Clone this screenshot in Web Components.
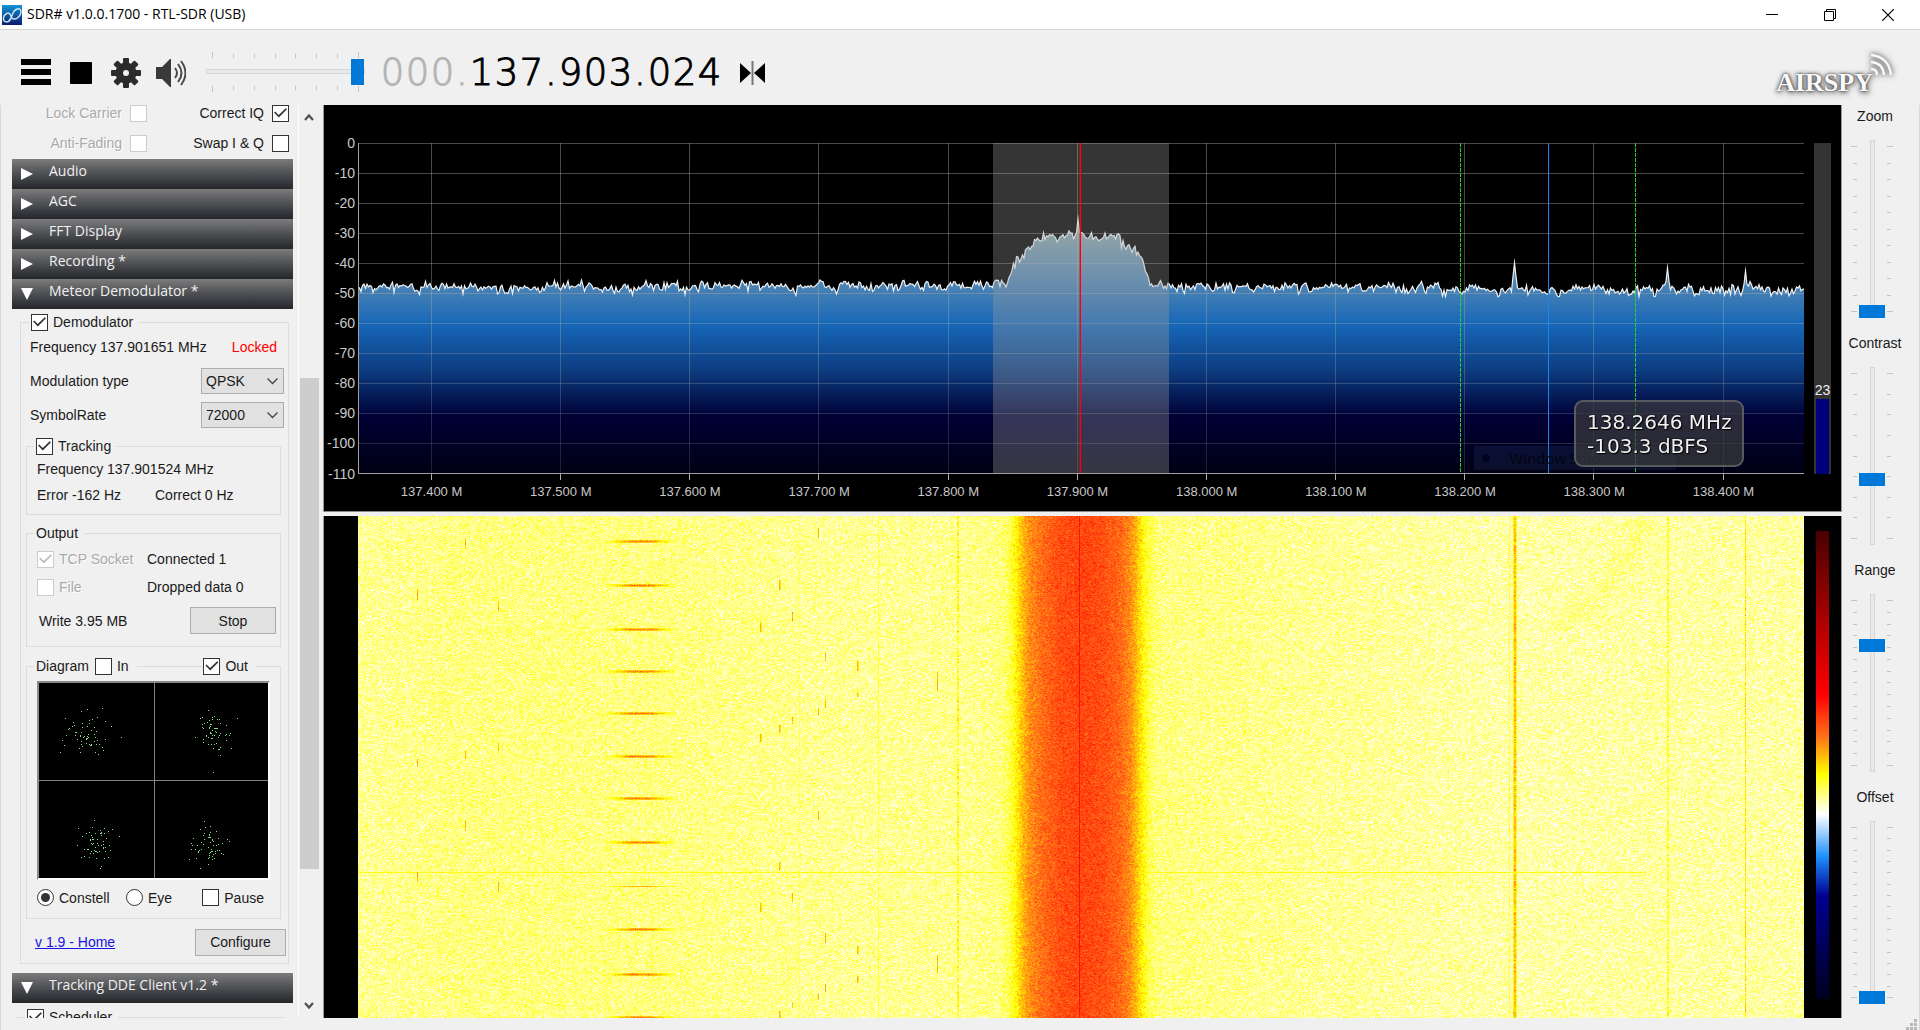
<!DOCTYPE html>
<html lang="en">
<head>
<meta charset="utf-8">
<title>SDR# v1.0.0.1700 - RTL-SDR (USB)</title>
<style>
  html, body { margin: 0; height: 100%; background: #f0f0f0; overflow: hidden; }
  body { font: 14px/18px "Liberation Sans", Arial, sans-serif; color: #1a1a1a; }
</style>
</head>
<body>
<sdr-app></sdr-app>

<script>
const define = (name, html, setup) => {
  const t = document.createElement('template');
  t.innerHTML = html;
  customElements.define(name, class extends HTMLElement {
    connectedCallback() {
      if (this.shadowRoot) return;
      const root = this.attachShadow({ mode: 'open' });
      root.append(t.content.cloneNode(true));
      if (setup) setup.call(this, root);
    }
  });
};

/* Seeded generator so that every load draws the same noise */
const rng = seed => () => {
  seed = (seed + 0x6D2B79F5) | 0;
  let t = Math.imul(seed ^ (seed >>> 15), 1 | seed);
  t = (t + Math.imul(t ^ (t >>> 7), 61 | t)) ^ t;
  return ((t ^ (t >>> 14)) >>> 0) / 4294967296;
};
const gauss = r => (r() + r() + r() + r() - 2) * 1.73;
const curve = (pts, x) => {
  if (x <= pts[0][0]) return pts[0][1];
  for (let i = 1; i < pts.length; i++)
    if (x <= pts[i][0]) {
      const [a, b] = pts[i - 1], [c, d] = pts[i];
      return b + (d - b) * (x - a) / (c - a);
    }
  return pts[pts.length - 1][1];
};
const fitCanvas = (host, canvas, draw) => {
  const run = () => {
    const w = Math.round(host.clientWidth), h = Math.round(host.clientHeight);
    if (!w || !h || (canvas.width === w && canvas.height === h)) return;
    canvas.width = w; canvas.height = h;
    draw(canvas.getContext('2d'), w, h);
  };
  run();
  new ResizeObserver(run).observe(host);
};

/* ---------- small controls ---------- */
define('ui-check', `
<style>
  :host { display: inline-block; }
  label { display: flex; align-items: center; gap: 5px; white-space: nowrap; }
  :host([before]) label { flex-direction: row-reverse; gap: 8px; height: 16px; }
  input { appearance: none; box-sizing: border-box; margin: 0; width: 17px; height: 17px; flex: none;
          border: 1px solid #333; background: #fff; display: grid; place-items: center; }
  input:checked::before { content: ""; width: 13px; height: 11px; background: #333;
    clip-path: polygon(0 45%, 9% 36%, 36% 68%, 90% 6%, 100% 15%, 37% 90%); }
  input[type=radio] { border-radius: 50%; }
  input[type=radio]:checked::before { width: 9px; height: 9px; border-radius: 50%; clip-path: none; }
  input:disabled { border-color: #ccc; }
  input:disabled:checked::before { background: #bbb; }
  :host([off]) label { color: #a9a9a9; text-shadow: 1px 1px #fff; }
</style>
<label><input type="checkbox"><slot></slot></label>`, function (root) {
  const i = root.querySelector('input');
  if (this.hasAttribute('radio')) { i.type = 'radio'; i.name = 'view'; }
  i.checked = this.hasAttribute('on');
  i.disabled = this.hasAttribute('off');
});

define('ui-group', `
<style>
  :host { display: block; }
  fieldset { margin: 0; min-width: 0; border: 1px solid #dcdcdc; padding: 0; }
  legend { margin-left: var(--legend-x, 8px); padding: 0 6px 0 2px; height: 18px; display: flex; align-items: center; }
  :host([wide]) legend { width: calc(100% - 8px); box-sizing: border-box; padding-right: 0; }
  :host([wide]) slot[name=legend] { display: flex; align-items: center; width: 100%; }
</style>
<fieldset><legend><slot name="legend"></slot></legend><slot></slot></fieldset>`);

define('ui-select', `
<style>
  :host { display: block; position: relative; width: 83px; height: 26px; }
  select { appearance: none; box-sizing: border-box; width: 100%; height: 100%; margin: 0; border: 1px solid #adadad;
           border-radius: 0; background: #e1e1e1; padding: 0 4px; font: inherit; color: inherit; }
  svg { position: absolute; right: 6px; top: 10px; pointer-events: none; }
</style>
<select><option></option></select>
<svg width="11" height="7"><path d="M.5 .5L5.500 5.500L10.500 .5" fill="none" stroke="#444" stroke-width="1.300"/></svg>`,
function (root) {
  root.querySelector('option').textContent = this.getAttribute('value');
  root.querySelector('select').setAttribute('aria-label', this.getAttribute('label'));
});

define('ui-button', `
<style>
  :host { display: block; height: 27px; }
  button { width: 100%; height: 100%; box-sizing: border-box; border: 1px solid #adadad; background: #e1e1e1;
           font: inherit; color: inherit; padding: 0; }
</style>
<button type="button"><slot></slot></button>`);

define('ui-slider', `
<style>
  :host { display: flex; flex-direction: column; align-items: center; --len: 178px; }
  :host([long]) { --len: 183px; }
  label { line-height: 22px; padding-left: 6px; }
  .row { display: flex; height: var(--len); margin: 13px 0 14px; gap: 1px; }
  .ticks { display: flex; flex-direction: column; justify-content: space-between; width: 6px; padding: 6px 0; align-items: flex-end; }
  .ticks.r { align-items: flex-start; }
  .ticks i { width: 4px; height: 1px; background: #c4c4c4; }
  .ticks i:first-child, .ticks i:last-child { width: 6px; }
  input { appearance: none; margin: 0; padding: 0; width: 28px; height: var(--len);
          writing-mode: vertical-lr; direction: rtl;
          background: linear-gradient(#d6d6d6, #d6d6d6) center / 5px 100% no-repeat; }
  input::-webkit-slider-runnable-track { background: linear-gradient(#e7eaea, #e7eaea) center / 3px calc(100% - 2px) no-repeat; width: 28px; height: 100%; }
  input::-webkit-slider-thumb { appearance: none; width: 28px; height: 13px; background: #0078d7 content-box; border: 0 solid transparent; border-width: 0 1px; border-radius: 0; }
</style>
<label for="s"></label>
<div class="row"><span class="ticks l"></span><input id="s" type="range" min="0" max="100"><span class="ticks r"></span></div>`,
function (root) {
  root.querySelector('label').textContent = this.getAttribute('label');
  root.querySelector('input').value = this.getAttribute('value');
  for (const c of root.querySelectorAll('.ticks')) c.innerHTML = '<i></i>'.repeat(+this.getAttribute('ticks'));
});

define('volume-slider', `
<style>
  :host { display: flex; flex-direction: column; width: 159px; gap: 1px; }
  .t { display: flex; justify-content: space-between; padding: 0 6px; }
  .t i { width: 1px; height: 4px; background: #c4c4c4; }
  .t i:first-child, .t i:last-child { height: 6px; }
  .t.a { align-items: flex-end; }
  input { appearance: none; margin: 0; width: 159px; height: 26px;
          background: linear-gradient(#d6d6d6, #d6d6d6) center / 100% 5px no-repeat; }
  input::-webkit-slider-runnable-track { height: 26px; background: linear-gradient(#e7eaea, #e7eaea) center / calc(100% - 2px) 3px no-repeat; }
  input::-webkit-slider-thumb { appearance: none; width: 13px; height: 26px; background: #0078d7; border: 0; border-radius: 0; }
</style>
<span class="t a"><i></i><i></i><i></i><i></i><i></i><i></i><i></i><i></i></span>
<input type="range" min="0" max="100" value="99" aria-label="Volume">
<span class="t"><i></i><i></i><i></i><i></i><i></i><i></i><i></i><i></i></span>`);

define('panel-header', `
<style>
  :host { display: block; height: 30px; }
  button { width: 100%; height: 30px; border: 0; margin: 0; padding: 0 0 6px 9px; display: flex; align-items: center; gap: 16px;
    background: linear-gradient(#7c7c7c, #5b5c5f 35%, #3c3e43 70%, #24262a); color: #f0f0f0;
    font: 14px/20px "Open Sans", "Noto Sans", sans-serif; text-align: left; }
  svg { margin-top: 6px; }
</style>
<button type="button"><svg width="12" height="12"><path fill="#fff" d="M0 0L12 6L0 12Z"/></svg><slot></slot></button>`,
function (root) {
  if (this.hasAttribute('open')) root.querySelector('path').setAttribute('d', 'M0 0H12L6 12Z');
});

/* ---------- title bar and toolbar ---------- */
define('title-bar', `
<style>
  :host { display: flex; height: 29px; align-items: center; background: #fff; border-bottom: 1px solid #d4d6d6; padding: 0 3px 0 2px; color: #000; }
  h1 { font: 14px/20px "Open Sans", "Noto Sans", sans-serif; margin: 0 auto 0 5px; padding-bottom: 1px; }
  button { border: 0; padding: 0; background: none; width: 58px; height: 28px; display: grid; place-items: center; }
</style>
<svg width="20" height="20"><defs><linearGradient id="g" x2="0" y2="1"><stop stop-color="#1295d8"/><stop offset="1" stop-color="#0a1a6c"/></linearGradient></defs>
  <rect width="20" height="20" fill="url(#g)"/><path d="M9 14C6 19 1 17 1.500 13C2 9 7 6 8.500 10C9.500 13 10 14 12 14C17 14 20 8 18.500 5C17 2 12 5 11 8C10 11 9 14 6.500 16" fill="none" stroke="#cfe6f5" stroke-width="1.400"/></svg>
<h1>SDR# v1.0.0.1700 - RTL-SDR (USB)</h1>
<button type="button" aria-label="Minimize"><svg width="12" height="12"><path d="M0 5.500H12" stroke="#000"/></svg></button>
<button type="button" aria-label="Restore"><svg width="12" height="12" fill="none" stroke="#000"><path d="M.5 2.500H9.500V11.500H.5ZM2.500 2.500V.5H11.500V9.500H9.500"/></svg></button>
<button type="button" aria-label="Close"><svg width="12" height="12"><path d="M0 0L12 12M12 0L0 12" stroke="#000" stroke-width="1.200"/></svg></button>`);

define('freq-display', `
<style>
  :host { display: flex; font: 200 37px/44px "DejaVu Sans Light", "DejaVu Sans", sans-serif; color: #000; -webkit-text-stroke: 1px; }
  span { width: 25px; text-align: center; }
  .p { width: 14px; }
  .dim { color: #b4b4b4; }
</style>`, function (root) {
  [...this.getAttribute('value')].forEach((c, i) => {
    const s = document.createElement('span');
    s.textContent = c;
    s.className = (c === '.' ? 'p ' : '') + (i < 4 ? 'dim' : '');
    root.append(s);
  });
});

define('tool-bar', `
<style>
  :host { display: flex; align-items: center; height: 65px; padding: 10px 27px 0 21px; }
  button { border: 0; background: none; padding: 0; display: block; }
  button svg { display: block; }
  .stop { margin: 0 19px; }
  .gear { margin-right: 15px; }
  volume-slider { margin: 0 15px 0 20px; padding-bottom: 2px; }
  .step { margin-left: 18px; }
  .logo { margin-left: auto; display: flex; align-items: flex-end; height: 48px; color: #fafafa;
    font: bold 26px/28px "Liberation Serif", serif; text-shadow: 0 0 2px #444, 0 0 4px #555, 1px 2px 6px #666; }
  .logo svg { margin: 0 0 20px -4px; filter: drop-shadow(0 0 2px #777) drop-shadow(0 0 3px #999); }
</style>
<button type="button" aria-label="Menu"><svg width="30" height="27" ><path d="M0 0H30V6H0ZM0 10H30V16H0ZM0 20H30V26H0Z"/></svg></button>
<button type="button" class="stop" aria-label="Stop"><svg width="22" height="22"><rect width="22" height="22" rx="1"/></svg></button>
<button type="button" class="gear" aria-label="Settings"><svg width="30" height="30" viewBox="-15 -15 30 30"><g fill="#2b2b2b"><circle r="10.500"/><g id="teeth"></g></g><circle r="3" fill="#f0f0f0"/></svg></button>
<button type="button" aria-label="Mute"><svg width="30" height="28"><path fill="#3a3a3a" d="M0 8H6L14 0H15V28H14L6 20H0Z"/><path d="M19 9Q23 14 19 19M22 5Q29 14 22 23M25 2Q34 14 25 26" fill="none" stroke="#4a4a4a" stroke-width="2"/></svg></button>
<volume-slider></volume-slider>
<freq-display value="000.137.903.024"></freq-display>
<button type="button" class="step" aria-label="Snap"><svg width="25" height="24"><path d="M0 2L11 12L0 22ZM25 2L14 12L25 22Z"/><path d="M12.500 0V24" stroke="#777" stroke-width="2"/></svg></button>
<div class="logo">AIRSPY<svg width="24" height="24" fill="none" stroke="#f7f7f7" stroke-width="2.500"><path d="M2 2Q20 4 22 22M2 9Q14 10 15 22M2 16Q8 16 8 22"/></svg></div>`,
function (root) {
  root.querySelector('#teeth').innerHTML = [0, 45, 90, 135, 180, 225, 270, 315]
    .map(a => `<rect x="-3" y="-15" width="6" height="7" rx="1" transform="rotate(${a})"/>`).join('');
});

/* ---------- side panel ---------- */
define('constellation-plot', `
<style>
  :host { display: block; height: 199px; margin: 0 10px; box-sizing: border-box; background: #000;
    border: solid; border-width: 2px; border-color: #8a8a8a #fff #fff #8a8a8a; }
  svg { display: block; width: 100%; height: 100%; }
</style>
<svg viewBox="0 0 229 195" preserveAspectRatio="none" shape-rendering="crispEdges"></svg>`, function (root) {
  const r = rng(77);
  let s = '<path d="M115.500 0V195M0 97.500H229" stroke="#808080"/><path fill="#86e08a" d="';
  for (const [cx, cy] of [[48, 50], [174, 48], [57, 160], [171, 161]])
    for (let i = 0; i < 62; i++)
      s += `M${Math.round(cx + gauss(r) * 10)} ${Math.round(cy + gauss(r) * 10)}h1v1h-1z`;
  root.querySelector('svg').innerHTML = s + 'M174 89h1v1h-1zM82 54h1v1h-1zM21 69h1v1h-1z"/>';
});

define('side-panel', `
<style>
  :host { display: flex; width: 322px; overflow: hidden; }
  .content { width: 297px; box-sizing: border-box; padding-left: 11px; overflow: hidden; flex: none; height: 100%; }
  .content > * { width: 281px; }
  .opts { display: grid; grid-template-columns: 135px 1fr; padding-right: 4px; box-sizing: border-box; justify-items: end; height: 54px; grid-auto-rows: 30px; align-items: start; }
  .main, .sched { box-sizing: border-box; width: 269px; margin: 4px 0 9px 8px; --legend-x: 8px; }
  .sched { margin: 5px 0 0 4px; }
  .row { display: flex; align-items: center; justify-content: space-between; height: 26px; padding: 0 4px 0 9px; }
  .lock { height: 28px; padding-right: 11px; margin: 2px 0 3px; }
  .lock b { font-weight: normal; color: #f00; }
  .sel { height: 34px; }
  ui-group ui-group { margin: 0 7px 8px 5px; --legend-x: 7px; }
  ui-group ui-group.track { margin: 5px 7px 9px 5px; }
  .track .row, .out .row { padding-left: 10px; justify-content: flex-start; }
  .track .row:first-of-type { padding-top: 1px; }
  .track .last { padding-bottom: 6px; }
  .track .last span { width: 118px; }
  .out .row { height: 28px; }
  .out .row > :first-child { width: 110px; }
  .out .row.first { padding-top: 3px; }
  .out .row.write { height: 39px; padding: 0 4px 6px 12px; justify-content: space-between; }
  .write ui-button { width: 86px; }
  ui-group ui-group.diag { margin-bottom: 0; margin-top: 10px; }
  .diag span { margin-right: 6px; }
  .diag hr { border: 0; height: 1px; background: #dcdcdc; margin: 0 0 0 8px; flex: 1; }
  .diag .tail { flex: 0 0 23px; }
  constellation-plot { margin-top: 6px; }
  .modes { height: 35px; padding: 0 16px 3px 10px; }
  .modes ui-check:nth-child(2) { margin-right: 14px; }
  .foot { height: 42px; padding: 2px 2px 0 14px; }
  .foot ui-button { width: 91px; }
  a { color: #1414e6; }
  .bar { width: 20px; border-left: 1px solid #fff; display: flex; flex-direction: column; align-items: center; }
  .bar button { border: 0; background: none; padding: 0; height: 24px; width: 20px; display: grid; place-items: center; flex: none; }
  .bar .a { flex: 249; } .bar .thumb { flex: 492; width: 19px; background: #cdcdcd; } .bar .b { flex: 125; }
</style>
<div class="content">
  <div class="opts"><ui-check before off>Lock Carrier</ui-check><ui-check before on>Correct IQ</ui-check>
    <ui-check before off>Anti-Fading</ui-check><ui-check before>Swap I &amp; Q</ui-check></div>
  <panel-header>Audio</panel-header>
  <panel-header>AGC</panel-header>
  <panel-header>FFT Display</panel-header>
  <panel-header>Recording *</panel-header>
  <panel-header open>Meteor Demodulator *</panel-header>
  <ui-group class="main">
    <ui-check slot="legend" on>Demodulator</ui-check>
    <div class="row lock"><span>Frequency 137.901651 MHz</span><b>Locked</b></div>
    <div class="row sel"><span>Modulation type</span><ui-select value="QPSK" label="Modulation type"></ui-select></div>
    <div class="row sel"><span>SymbolRate</span><ui-select value="72000" label="SymbolRate"></ui-select></div>
    <ui-group class="track">
      <ui-check slot="legend" on>Tracking</ui-check>
      <div class="row">Frequency 137.901524 MHz</div>
      <div class="row last"><span>Error -162 Hz</span>Correct 0 Hz</div>
    </ui-group>
    <ui-group class="out">
      <span slot="legend">Output</span>
      <div class="row first"><ui-check off on>TCP Socket</ui-check><span>Connected 1</span></div>
      <div class="row"><ui-check off>File</ui-check><span>Dropped data 0</span></div>
      <div class="row write"><span>Write 3.95 MB</span><ui-button>Stop</ui-button></div>
    </ui-group>
    <ui-group class="diag" wide>
      <span slot="legend">Diagram</span><ui-check slot="legend">In</ui-check><hr slot="legend"><ui-check slot="legend" on>Out</ui-check><hr slot="legend" class="tail">
      <constellation-plot></constellation-plot>
      <div class="row modes"><ui-check radio on>Constell</ui-check><ui-check radio>Eye</ui-check><ui-check>Pause</ui-check></div>
    </ui-group>
    <div class="row foot"><a href="#home">v 1.9 - Home</a><ui-button>Configure</ui-button></div>
  </ui-group>
  <panel-header open>Tracking DDE Client v1.2 *</panel-header>
  <ui-group class="sched"><ui-check slot="legend" on>Scheduler</ui-check><div class="row"></div></ui-group>
</div>
<div class="bar">
  <button type="button" aria-label="Scroll up"><svg width="10" height="8"><path d="M1 7L5 2.500L9 7" fill="none" stroke="#505050" stroke-width="2.200"/></svg></button>
  <div class="a"></div><div class="thumb"></div><div class="b"></div>
  <button type="button" aria-label="Scroll down"><svg width="10" height="8"><path d="M1 1L5 5.500L9 1" fill="none" stroke="#505050" stroke-width="2.200"/></svg></button>
</div>`);

/* ---------- spectrum ---------- */
define('spectrum-canvas', `
<style>:host { display: block; position: relative; overflow: hidden; } canvas { display: block; position: absolute; inset: 0; }</style>
<canvas></canvas>`, function (root) {
  fitCanvas(this, root.querySelector('canvas'), (c, W, H) => {
    const kx = W / 1446, ky = (H - 7) / 330, bottom = Math.round(330 * ky);
    const r = rng(1700), pts = [];
    const base = [[0, 145], [600, 143], [640, 142], [650, 138], [655, 127], [660, 117], [668, 107], [676, 101], [683, 95], [695, 94],
      [715, 91], [745, 91], [754, 92], [764, 99], [772, 106], [777, 109], [784, 121], [791, 136], [796, 143], [960, 144], [1100, 147], [1446, 147]];
    let slow = 0;
    for (let x = 0; x <= 1446; x += 1.5) {
      slow = slow * .62 + gauss(r) * 1.8;
      let y = curve(base, x) + slow + gauss(r) * 2;
      for (const [px, py] of [[720, 76], [1156.500, 120], [1309.500, 125], [1387.500, 128]]) {
        const d = Math.abs(x - px);
        if (d < 3) y = Math.min(y, py + d * 9);
      }
      pts.push([x * kx, y * ky]);
    }
    c.fillStyle = '#000'; c.fillRect(0, 0, W, H);
    const g = c.createLinearGradient(0, 0, 0, bottom);
    [[0, '#c8d0d0'], [.29, '#82a0ac'], [.455, '#417db4'], [.55, '#1767b8'], [.69, '#0c3c80'], [.83, '#000035'], [1, '#000014']]
      .forEach(s => g.addColorStop(...s));
    c.fillStyle = g;
    c.beginPath(); c.moveTo(0, bottom);
    pts.forEach(p => c.lineTo(p[0], p[1]));
    c.lineTo(W, bottom); c.fill();
    const grid = (x, y, w, h) => {
      const pale = c.createLinearGradient(0, 0, 0, bottom);
      pale.addColorStop(0, 'rgba(175,175,175,.42)'); pale.addColorStop(.45, 'rgba(175,175,175,.38)'); pale.addColorStop(1, 'rgba(175,175,175,.18)');
      c.fillStyle = pale; c.fillRect(x, y, w, h);
    };
    for (let i = 0; i < 11; i++) grid(0, Math.round(i * 30 * ky), W, 1);
    for (let i = 0; i < 11; i++) {
      const x = Math.round((73 + i * 129.150) * kx);
      grid(x, 0, 1, bottom);
      c.fillStyle = '#aaa'; c.fillRect(x, bottom, 1, 7);
    }
    c.strokeStyle = '#eef2f5'; c.lineWidth = 1.2; c.beginPath();
    pts.forEach((p, i) => i ? c.lineTo(p[0], p[1]) : c.moveTo(p[0], p[1]));
    c.stroke();
    c.fillStyle = 'rgba(160,160,160,.33)'; c.fillRect(635 * kx, 0, 176 * kx, bottom);
    c.fillStyle = '#f00'; c.fillRect(Math.round(722 * kx), 0, 1, bottom);
    c.fillStyle = 'rgba(255,0,0,.4)'; c.fillRect(Math.round(722 * kx) - 1, 0, 1, bottom);
    c.fillStyle = '#1c86ee'; c.fillRect(Math.round(1190 * kx), 0, 1, bottom);
    c.fillStyle = '#2bd42b';
    for (const x of [1102, 1277]) for (let y = 0; y < bottom - 1; y += 5) c.fillRect(Math.round(x * kx), y, 1, 4);
    c.fillStyle = '#a0a0a0'; c.fillRect(0, bottom, W, 1); c.fillRect(0, 0, 1, bottom);
  });
});

define('spectrum-view', `
<style>
  :host { display: flex; background: #000; color: #c8c8c8; font-size: 13px; line-height: 16px; border-bottom: 1px solid #8a8a8a; box-sizing: border-box; }
  .y { width: 31px; padding: 23px 3px 22px 0; display: flex; flex-direction: column; text-align: right; font-size: 14px; }
  .y span { flex: 1; display: flex; align-items: center; justify-content: flex-end; }
  .plot { flex: 1; min-width: 0; display: flex; flex-direction: column; padding-top: 38px; position: relative; }
  spectrum-canvas { flex: 1; }
  .x { display: grid; grid-template-columns: repeat(11, 1fr); padding: 4px 16px 11px 9px; text-align: center; }
  .level { margin: 38px 10px 37px; width: 17px; background: #333; display: flex; flex-direction: column; align-items: center; justify-content: flex-end; color: #eee; font-size: 14px; line-height: 18px; }
  .level i { width: 13px; height: 75px; background: #00007c; }
  .snip { position: absolute; left: 77.200%; bottom: 41px; width: 202px; height: 24px; box-sizing: border-box; background: rgba(40,70,120,.22); color: #03040f;
     font: 15px/24px "Open Sans", sans-serif; padding-left: 35px; }
  .snip::before { content: ""; position: absolute; left: 8px; top: 8px; width: 8px; height: 8px; border-radius: 50%; background: #02031e; }
  .tip { position: absolute; left: 84.100%; bottom: 44px; box-sizing: border-box; width: 170px; height: 67px; padding: 8px 0 0 11px; white-space: nowrap;
     border: 2px solid rgba(110,110,110,.7); border-radius: 9px; background: rgba(60,60,62,.7); color: #f0f0f0; font: 20px/24px "DejaVu Sans", sans-serif; text-shadow: 0 0 2px #000, 1px 1px 1px #000; }
</style>
<div class="y"><span>0</span><span>-10</span><span>-20</span><span>-30</span><span>-40</span><span>-50</span><span>-60</span><span>-70</span><span>-80</span><span>-90</span><span>-100</span><span>-110</span></div>
<div class="plot"><spectrum-canvas></spectrum-canvas>
  <div class="x"><span>137.400 M</span><span>137.500 M</span><span>137.600 M</span><span>137.700 M</span><span>137.800 M</span><span>137.900 M</span><span>138.000 M</span><span>138.100 M</span><span>138.200 M</span><span>138.300 M</span><span>138.400 M</span></div>
  <div class="snip">Window Snip</div>
  <div class="tip">138.2646 MHz<br>-103.3 dBFS</div>
</div>
<div class="level"><span>23</span><i></i></div>`);

/* ---------- waterfall ---------- */
define('waterfall-canvas', `
<style>:host { display: block; position: relative; overflow: hidden; flex: 1; } canvas { position: absolute; inset: 0; }</style>
<canvas></canvas>`, function (root) {
  const ramp = [[-1, 30, 144, 255], [0, 255, 255, 255], [1, 255, 255, 0], [2, 255, 112, 24], [3, 255, 0, 0], [4, 200, 0, 0]];
  const lane = [[0, .42], [100, .5], [300, .5], [480, .42], [610, .44], [642, .5], [650, .66], [657, 1], [663, 1.4], [671, 1.78], [684, 2.05],
    [702, 2.3], [725, 2.38], [745, 2.3], [762, 2.08], [772, 1.8], [778, 1.45], [785, 1], [791, .7], [800, .5], [900, .45], [1150, .34], [1300, .37], [1446, .36]];
  /* x, top, bottom of the short bursts */
  const bursts = [[107,23,33],[59,74,84],[140,85,95],[140,227,235],[107,235,243],[59,243,250],[107,306,316],[59,357,367],[140,367,377],
    [460,12,22],[421,64,74],[434,96,105],[402,106,116],[467,136,145],[499,145,155],[499,177,181],[579,156,175],[467,183,192],[460,192,199],
    [434,201,208],[421,209,217],[402,218,226],[460,296,305],[421,347,355],[434,378,387],[402,388,397],[467,418,428],[499,431,439],
    [579,440,458],[499,461,468],[467,469,477],[460,479,485],[434,488,493],[421,496,503]];
  const pulses = [25, 69, 113, 155, 197, 240, 283, 327, 372, 414, 459, 502];
  fitCanvas(this, root.querySelector('canvas'), (c, W, H) => {
    const r = rng(903024), img = c.createImageData(W, H), v = new Float32Array(W * H);
    const kx = W / 1446, ky = H / 503;
    const prof = Array.from({ length: W }, (_, x) => curve(lane, x / kx));
    for (let y = 0; y < H; y++) {
      let prev = 0;
      for (let x = 0; x < W; x++) {
        const i = y * W + x, n = gauss(r);
        const m = n * .8 + prev * .35 + (y ? (v[i - W] - prof[x]) * .9 : 0);
        prev = n;
        v[i] = prof[x] + m * (prof[x] > 1.2 ? .165 : .19);
        if (prof[x] < .6 && r() < .0006) v[i] = -.2;
      }
    }
    const add = (x, y, f) => {
      x = Math.round(x * kx); y = Math.round(y * ky);
      if (x >= 0 && x < W && y >= 0 && y < H) v[y * W + x] = f(v[y * W + x]);
    };
    const vline = (x, w, mean, amp) => {
      for (let y = 0; y < 503; y++) {
        const n = gauss(r);
        for (let k = 0; k < w; k++) add(x + k, y, () => mean + n * amp);
      }
    };
    vline(205, 1, .62, .15); vline(441, 1, .58, .12); vline(520, 1, .75, .15); vline(599, 2, .85, .24);
    vline(814, 1, .56, .15); vline(1151, 1, .7, .2);
    vline(1155, 1, 1, .18); vline(1156, 2, 1.4, .2); vline(1158, 1, .9, .18);
    vline(1309, 2, .8, .2); vline(1387, 1, 1.1, .3); vline(721, 1, 2.85, .1);
    for (let x = 0; x < 1288; x++) add(x, 357, o => Math.max(o, .95 + gauss(r) * .1));
    for (const [x, a, b] of bursts) for (let y = a; y < b; y++) {
      add(x, y, () => 1.5 + gauss(r) * .15);
      if (x === 421 || x === 499 || x === 402) add(x + 1, y, () => 1.15);
    }
    pulses.forEach((y0, n) => {
      for (let x = 245; x < 319; x++) {
        const e = 1 - Math.abs(x - 282) / 37;
        for (let k = -1; k < (n === 8 ? 0 : 2); k++)
          add(x, y0 + k, o => Math.max(o, .5 + Math.min(e * 1.8, 1.35) * (k ? .7 : 1) + gauss(r) * .16));
      }
    });
    /* faint drifting carrier in the upper right */
    for (let y = 0; y < 115; y++) {
      const cx = 1285 - y * .25 - y * y * .0045;
      for (let x = -22; x < 22; x++) add(cx + x, y, o => o + .14 * (1 - Math.abs(x) / 22));
    }
    for (let i = 0; i < v.length; i++) {
      const t = Math.max(-.95, Math.min(3.95, v[i])), k = Math.floor(t) + 1, f = t - Math.floor(t);
      for (let q = 0; q < 3; q++) img.data[i * 4 + q] = ramp[k][q + 1] + (ramp[k + 1][q + 1] - ramp[k][q + 1]) * f;
      img.data[i * 4 + 3] = 255;
    }
    c.putImageData(img, 0, 0);
  });
});

define('waterfall-view', `
<style>
  :host { display: flex; background: #000; padding-left: 34px; box-sizing: border-box; }
  .scale { width: 13px; margin: 15px 12px 19px; background: linear-gradient(#480000, #ff0000 35%, #ff6a18 43.500%, #ffff00 52%, #ffffff 60.500%, #1e90ff 69.500%, #000090 78%, #000020); }
</style>
<waterfall-canvas></waterfall-canvas><div class="scale"></div>`);

/* ---------- window ---------- */
define('sdr-app', `
<style>
  :host { display: flex; flex-direction: column; height: 100vh; background: #f0f0f0; }
  .body { flex: 1; min-height: 0; display: flex; border: solid #d8d8d8; border-width: 0 1px; padding-bottom: 12px; position: relative; }
  .views { flex: 1; min-width: 0; display: flex; flex-direction: column; gap: 4px; }
  spectrum-view { flex: 406 1 0; } waterfall-view { flex: 503 1 0; }
  .views > * { border-left: 1px solid #999; border-right: 1px solid #999; }
  .sliders { width: 77px; box-sizing: border-box; padding-right: 17px; display: flex; flex-direction: column; flex: none; }
  .grip { position: absolute; right: 2px; bottom: 0; }
</style>
<title-bar></title-bar>
<tool-bar></tool-bar>
<div class="body">
  <side-panel></side-panel>
  <div class="views"><spectrum-view></spectrum-view><waterfall-view></waterfall-view></div>
  <div class="sliders">
    <ui-slider label="Zoom" ticks="11" value="0"></ui-slider>
    <ui-slider label="Contrast" ticks="9" value="36"></ui-slider>
    <ui-slider label="Range" ticks="15" value="73"></ui-slider>
    <ui-slider label="Offset" ticks="16" value="0" long></ui-slider>
  </div>
  <svg class="grip" width="11" height="11"><path fill="#b8b8b8" d="M8 0h3v3h-3zM4 4h3v3h-3zM8 4h3v3h-3zM0 8h3v3h-3zM4 8h3v3h-3zM8 8h3v3h-3z"/></svg>
</div>`);
</script>
</body>
</html>
